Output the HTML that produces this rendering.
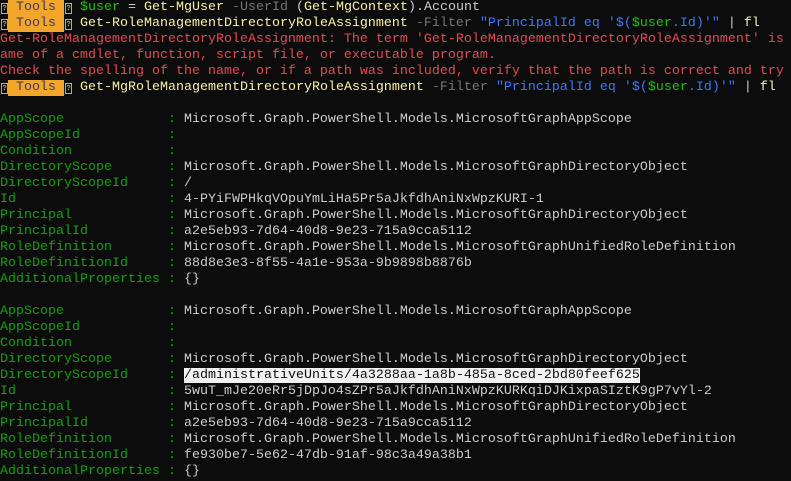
<!DOCTYPE html>
<html><head><meta charset="utf-8"><style>
html,body{margin:0;padding:0;background:#0c0c0c;width:791px;height:481px;overflow:hidden}
pre{margin:0;font-family:"Liberation Mono",monospace;font-size:13.33px;line-height:16px;color:#cccccc;white-space:pre}
.l{height:16px;display:block}
.t{background:#f4a62a;color:#3b3b58;display:inline-block;height:16px;vertical-align:top}
.b{display:inline-block;width:8px;height:16px;vertical-align:top;position:relative}
.b::after{content:"?";position:absolute;left:1px;top:3px;width:5px;height:9px;border:1px solid #f4a62a;font-size:7px;line-height:9px;text-align:center;color:#f4a62a;font-family:"Liberation Sans",sans-serif;font-weight:bold}
.y{color:#f9f1a5}.g{color:#16c60c}.p{color:#767676}.s{color:#3b78ff}.r{color:#e74856}.k{color:#13a10e}
.h{background:#f2f2f2;color:#0c0c0c}
</style></head><body><pre><span class="l"><span class="b"></span><span class="t"> Tools </span><span class="b"></span> <span class="g">$user</span> = <span class="y">Get-MgUser</span> <span class="p">-UserId</span> (<span class="y">Get-MgContext</span>).Account</span><span class="l"><span class="b"></span><span class="t"> Tools </span><span class="b"></span> <span class="y">Get-RoleManagementDirectoryRoleAssignment</span> <span class="p">-Filter</span> <span class="s">"PrincipalId eq '$(</span><span class="g">$user</span><span class="s">.Id)'"</span> | <span class="y">fl</span></span><span class="l r">Get-RoleManagementDirectoryRoleAssignment: The term 'Get-RoleManagementDirectoryRoleAssignment' is</span><span class="l r">ame of a cmdlet, function, script file, or executable program.</span><span class="l r">Check the spelling of the name, or if a path was included, verify that the path is correct and try</span><span class="l"><span class="b"></span><span class="t"> Tools </span><span class="b"></span> <span class="y">Get-MgRoleManagementDirectoryRoleAssignment</span> <span class="p">-Filter</span> <span class="s">"PrincipalId eq '$(</span><span class="g">$user</span><span class="s">.Id)'"</span> | <span class="y">fl</span></span><span class="l"> </span><span class="l"><span class="k">AppScope             :</span> Microsoft.Graph.PowerShell.Models.MicrosoftGraphAppScope</span><span class="l"><span class="k">AppScopeId           :</span></span><span class="l"><span class="k">Condition            :</span></span><span class="l"><span class="k">DirectoryScope       :</span> Microsoft.Graph.PowerShell.Models.MicrosoftGraphDirectoryObject</span><span class="l"><span class="k">DirectoryScopeId     :</span> /</span><span class="l"><span class="k">Id                   :</span> 4-PYiFWPHkqVOpuYmLiHa5Pr5aJkfdhAniNxWpzKURI-1</span><span class="l"><span class="k">Principal            :</span> Microsoft.Graph.PowerShell.Models.MicrosoftGraphDirectoryObject</span><span class="l"><span class="k">PrincipalId          :</span> a2e5eb93-7d64-40d8-9e23-715a9cca5112</span><span class="l"><span class="k">RoleDefinition       :</span> Microsoft.Graph.PowerShell.Models.MicrosoftGraphUnifiedRoleDefinition</span><span class="l"><span class="k">RoleDefinitionId     :</span> 88d8e3e3-8f55-4a1e-953a-9b9898b8876b</span><span class="l"><span class="k">AdditionalProperties :</span> {}</span><span class="l"> </span><span class="l"><span class="k">AppScope             :</span> Microsoft.Graph.PowerShell.Models.MicrosoftGraphAppScope</span><span class="l"><span class="k">AppScopeId           :</span></span><span class="l"><span class="k">Condition            :</span></span><span class="l"><span class="k">DirectoryScope       :</span> Microsoft.Graph.PowerShell.Models.MicrosoftGraphDirectoryObject</span><span class="l"><span class="k">DirectoryScopeId     :</span> <span class="h">/administrativeUnits/4a3288aa-1a8b-485a-8ced-2bd80feef625</span></span><span class="l"><span class="k">Id                   :</span> 5wuT_mJe20eRr5jDpJo4sZPr5aJkfdhAniNxWpzKURKqiDJKixpaSIztK9gP7vYl-2</span><span class="l"><span class="k">Principal            :</span> Microsoft.Graph.PowerShell.Models.MicrosoftGraphDirectoryObject</span><span class="l"><span class="k">PrincipalId          :</span> a2e5eb93-7d64-40d8-9e23-715a9cca5112</span><span class="l"><span class="k">RoleDefinition       :</span> Microsoft.Graph.PowerShell.Models.MicrosoftGraphUnifiedRoleDefinition</span><span class="l"><span class="k">RoleDefinitionId     :</span> fe930be7-5e62-47db-91af-98c3a49a38b1</span><span class="l"><span class="k">AdditionalProperties :</span> {}</span></pre></body></html>
